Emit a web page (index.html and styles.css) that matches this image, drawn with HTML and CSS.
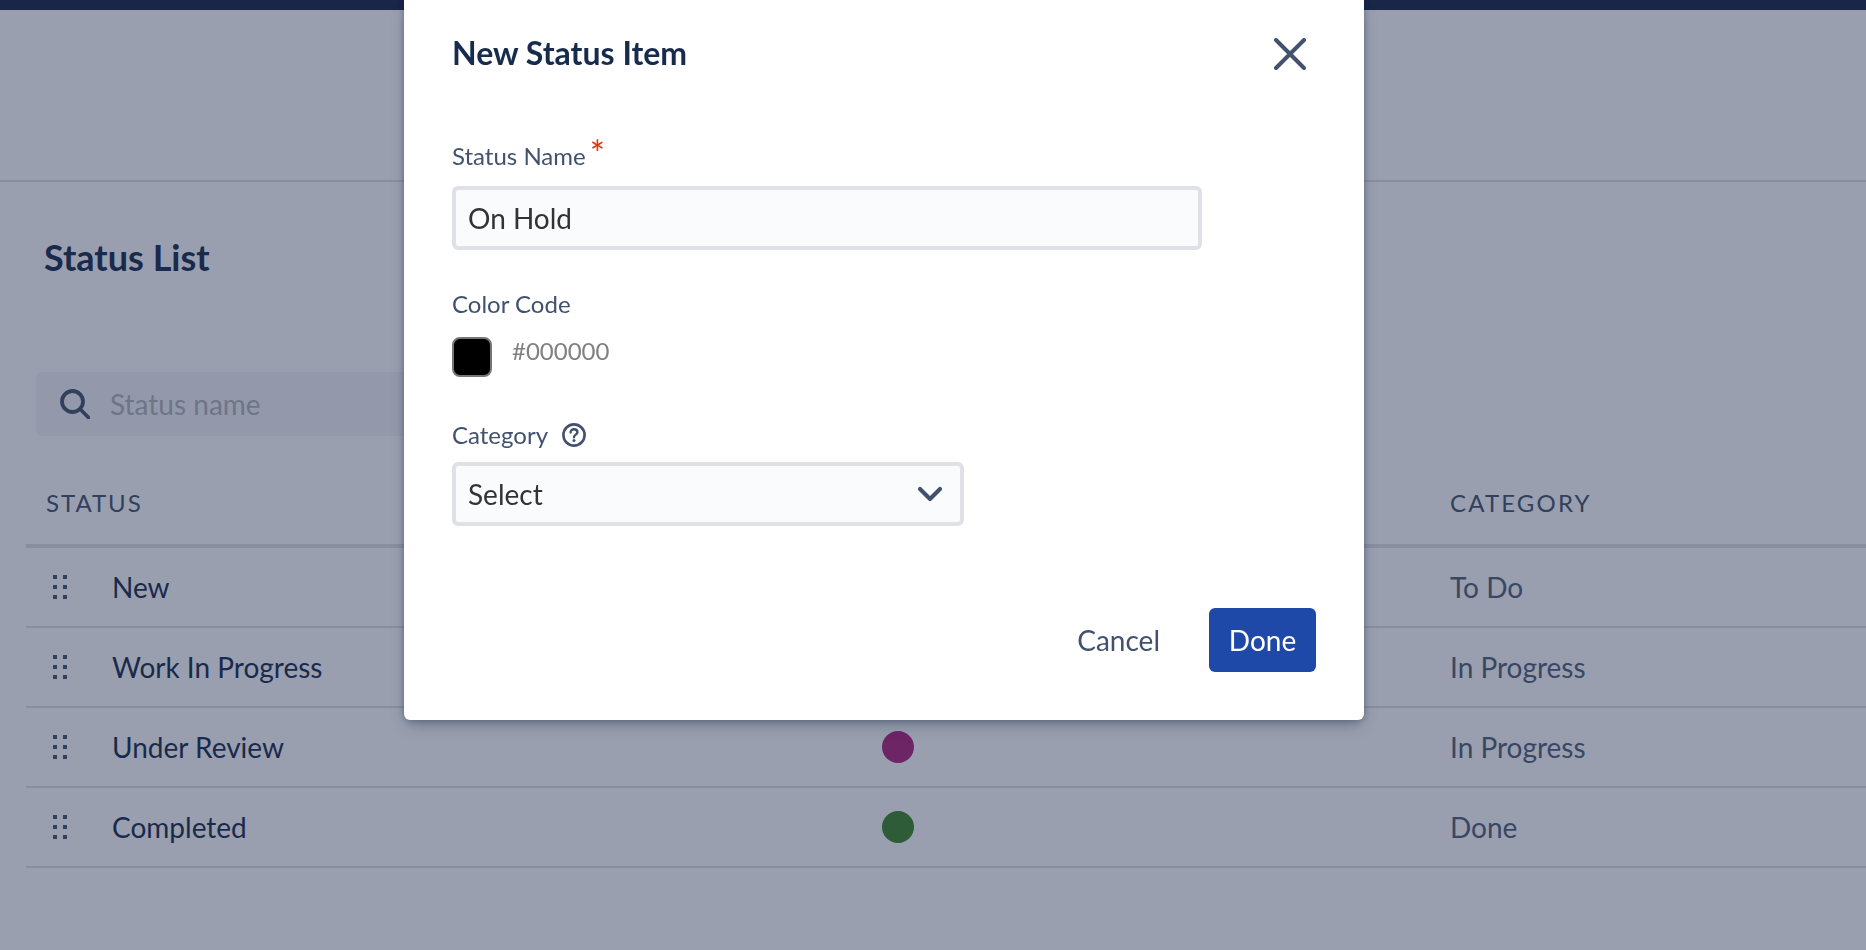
FILE: index.html
```html
<!DOCTYPE html>
<html lang="en">
<head>
<meta charset="utf-8">
<title>New Status Item</title>
<link rel="stylesheet" href="styles.css">
</head>
<body>
<div class="page">
  <div class="topbar"></div>
  <header class="page-header"></header>
  <main class="content">
    <h1 class="list-title">Status List</h1>
    <div class="search">
      <svg class="search-icon" viewBox="0 0 30 30" width="30" height="30" aria-hidden="true"><circle cx="12.5" cy="12.5" r="10.5" fill="none" stroke="#42526e" stroke-width="3.8"/><path d="M20.5 20.5 L28.5 28.5" fill="none" stroke="#42526e" stroke-width="3.8" stroke-linecap="round"/></svg>
      <span class="search-placeholder">Status name</span>
    </div>
    <div class="table">
      <div class="row head">
        <span class="cell-grip"></span>
        <span class="cell-name head-label head-status">STATUS</span>
        <span class="cell-color"></span>
        <span class="cell-cat head-label">CATEGORY</span>
      </div>
      <div class="row">
        <span class="cell-grip"><svg class="grip" viewBox="0 0 15 25" width="15" height="25"><g fill="#42526e"><rect x="0" y="0" width="4" height="4"/><rect x="10" y="0" width="4" height="4"/><rect x="0" y="10" width="4" height="4"/><rect x="10" y="10" width="4" height="4"/><rect x="0" y="20" width="4" height="4"/><rect x="10" y="20" width="4" height="4"/></g></svg></span>
        <span class="cell-name">New</span>
        <span class="cell-color"></span>
        <span class="cell-cat">To Do</span>
      </div>
      <div class="row">
        <span class="cell-grip"><svg class="grip" viewBox="0 0 15 25" width="15" height="25"><g fill="#42526e"><rect x="0" y="0" width="4" height="4"/><rect x="10" y="0" width="4" height="4"/><rect x="0" y="10" width="4" height="4"/><rect x="10" y="10" width="4" height="4"/><rect x="0" y="20" width="4" height="4"/><rect x="10" y="20" width="4" height="4"/></g></svg></span>
        <span class="cell-name">Work In Progress</span>
        <span class="cell-color"></span>
        <span class="cell-cat">In Progress</span>
      </div>
      <div class="row">
        <span class="cell-grip"><svg class="grip" viewBox="0 0 15 25" width="15" height="25"><g fill="#42526e"><rect x="0" y="0" width="4" height="4"/><rect x="10" y="0" width="4" height="4"/><rect x="0" y="10" width="4" height="4"/><rect x="10" y="10" width="4" height="4"/><rect x="0" y="20" width="4" height="4"/><rect x="10" y="20" width="4" height="4"/></g></svg></span>
        <span class="cell-name">Under Review</span>
        <span class="cell-color"><i class="dot dot-purple"></i></span>
        <span class="cell-cat">In Progress</span>
      </div>
      <div class="row">
        <span class="cell-grip"><svg class="grip" viewBox="0 0 15 25" width="15" height="25"><g fill="#42526e"><rect x="0" y="0" width="4" height="4"/><rect x="10" y="0" width="4" height="4"/><rect x="0" y="10" width="4" height="4"/><rect x="10" y="10" width="4" height="4"/><rect x="0" y="20" width="4" height="4"/><rect x="10" y="20" width="4" height="4"/></g></svg></span>
        <span class="cell-name">Completed</span>
        <span class="cell-color"><i class="dot dot-green"></i></span>
        <span class="cell-cat">Done</span>
      </div>
    </div>
  </main>
</div>

<div class="scrim"></div>

<section class="modal">
  <div class="modal-head">
    <h2 class="modal-title">New Status Item</h2>
    <svg class="close" viewBox="0 0 32 32" width="32" height="32" aria-hidden="true"><path d="M2 2 L30 30 M30 2 L2 30" fill="none" stroke="#42526e" stroke-width="4" stroke-linecap="round"/></svg>
  </div>

  <div class="label label-name">Status Name<span class="req">*</span></div>
  <div class="field field-name">On Hold</div>

  <div class="label label-color">Color Code</div>
  <div class="color-row">
    <span class="swatch"></span>
    <span class="hex">#000000</span>
  </div>

  <div class="label label-cat">Category
    <svg class="help" viewBox="0 0 24 24" width="24" height="24" aria-hidden="true"><circle cx="12" cy="12" r="10.6" fill="none" stroke="#42526e" stroke-width="2.6"/><path d="M8.6 9.4 C8.6 7.4 10.1 6.3 12 6.3 C14 6.3 15.4 7.5 15.4 9.2 C15.4 11.6 12 11.7 12 14.2" fill="none" stroke="#42526e" stroke-width="2.4" stroke-linecap="round"/><circle cx="12" cy="17.6" r="1.5" fill="#42526e"/></svg>
  </div>
  <div class="field field-select">
    <span>Select</span>
    <svg class="chevron" viewBox="0 0 26 16" width="26" height="16" aria-hidden="true"><path d="M3 3 L13 13 L23 3" fill="none" stroke="#42526e" stroke-width="4.2" stroke-linecap="round" stroke-linejoin="round"/></svg>
  </div>

  <div class="modal-foot">
    <span class="btn-cancel">Cancel</span>
    <span class="btn-done">Done</span>
  </div>
</section>
</body>
</html>
```

FILE: styles.css
```css
* { box-sizing: border-box; }

html, body {
  margin: 0;
  height: 100%;
  overflow: hidden;
}

body {
  background: #fff;
  font-family: "Lato", "Liberation Sans", sans-serif;
  color: #172b4d;
}

.page { height: 950px; }

.topbar {
  height: 10px;
  background: #182346;
}

.page-header {
  height: 172px;
  border-bottom: 2px solid #dfe1e6;
}

.content { padding: 55px 0 0 26px; }

.list-title {
  margin: 0 0 0 18px;
  font-size: 36px;
  line-height: 40px;
  font-weight: 700;
  color: #172b4d;
}

.search {
  margin: 95px 0 0 10px;
  width: 500px;
  height: 64px;
  border-radius: 6px;
  background: #f4f5f7;
  display: flex;
  align-items: center;
  padding-left: 24px;
  gap: 20px;
}

.search-icon { flex: none; }

.search-placeholder {
  font-size: 28px;
  color: #b0b3ba;
}

.table { margin-top: 28px; }

.row {
  display: grid;
  grid-template-columns: 86px 770px 568px 1fr;
  align-items: center;
  height: 80px;
  border-bottom: 2px solid #dfe1e6;
  font-size: 28px;
}

.row.head {
  height: 84px;
  border-bottom-width: 4px;
  padding-bottom: 4px;
}

.cell-grip {
  display: flex;
  padding-left: 27px;
}

.cell-name { color: #172b4d; }

.cell-color { display: flex; }

.cell-cat { color: #505f79; }

.head-label {
  font-size: 24px;
  letter-spacing: 2.15px;
  color: #42526e;
}

.head-status { margin-left: -66px; letter-spacing: 1.95px; }

.dot {
  width: 32px;
  height: 32px;
  border-radius: 50%;
}

.dot-purple { background: #b0217c; }
.dot-green { background: #3c852a; }

.scrim {
  position: fixed;
  inset: 0;
  background: rgba(29, 42, 75, 0.45);
}

.modal {
  position: fixed;
  left: 404px;
  top: 0;
  width: 960px;
  height: 720px;
  padding: 0 48px;
  background: #fff;
  border-radius: 0 0 6px 6px;
  box-shadow: 0 8px 16px -4px rgba(9, 30, 66, 0.35), 0 0 6px rgba(9, 30, 66, 0.3);
}

.modal-head {
  height: 108px;
  display: flex;
  justify-content: space-between;
  align-items: flex-start;
}

.modal-title {
  margin: 33px 0 0;
  font-size: 32px;
  line-height: 40px;
  font-weight: 700;
  color: #172b4d;
}

.close { margin: 38px 10px 0 0; }

.label {
  font-size: 24px;
  line-height: 30px;
  color: #42526e;
}

.label-name { margin-top: 33px; }
.label-color { margin-top: 39px; }
.label-cat {
  margin-top: 43px;
  display: flex;
  align-items: center;
  gap: 14px;
}

.req {
  color: #de350b;
  font-size: 36px;
  line-height: 0;
  margin-left: 4px;
  position: relative;
  top: 2px;
}

.field {
  height: 64px;
  border: 4px solid #dfe1e6;
  border-radius: 6px;
  background: #fafbfc;
  padding: 0 12px;
  display: flex;
  align-items: center;
  font-size: 28px;
  color: #333;
}

.field-name { width: 750px; margin-top: 15px; }

.field-select {
  width: 512px;
  margin-top: 12px;
  justify-content: space-between;
  padding-right: 17px;
}

.color-row {
  display: flex;
  align-items: flex-start;
  margin-top: 18px;
  height: 40px;
  gap: 20px;
}

.swatch {
  width: 40px;
  height: 40px;
  background: #000;
  border: 2px solid #767676;
  border-radius: 8px;
}

.hex {
  font-size: 24px;
  line-height: 28px;
  color: #808080;
}

.modal-foot {
  margin-top: 82px;
  display: flex;
  justify-content: flex-end;
  align-items: center;
  gap: 49px;
  font-size: 28px;
}

.btn-cancel { color: #42526e; }

.btn-done {
  width: 107px;
  height: 64px;
  border-radius: 6px;
  background: #1e49a9;
  color: #fff;
  display: flex;
  align-items: center;
  justify-content: center;
}
```
